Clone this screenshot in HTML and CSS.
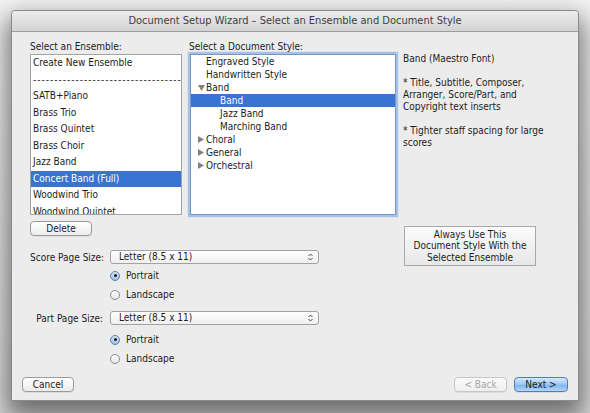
FILE: index.html
```html
<!DOCTYPE html>
<html>
<head>
<meta charset="utf-8">
<link rel="stylesheet" href="styles.css">
</head>
<body>
<div class="window">
  <div class="titlebar">Document Setup Wizard – Select an Ensemble and Document Style</div>
  <div class="main">
    <div class="top">
      <div class="col ens">
        <div class="label">Select an Ensemble:</div>
        <div class="list">
          <div class="item">Create New Ensemble</div>
          <div class="item dashes">-----------------------------------</div>
          <div class="item">SATB+Piano</div>
          <div class="item">Brass Trio</div>
          <div class="item">Brass Quintet</div>
          <div class="item">Brass Choir</div>
          <div class="item">Jazz Band</div>
          <div class="item sel">Concert Band (Full)</div>
          <div class="item">Woodwind Trio</div>
          <div class="item">Woodwind Quintet</div>
        </div>
      </div>
      <div class="col style">
        <div class="label">Select a Document Style:</div>
        <div class="tree">
          <div class="row"><span class="tri"></span><span class="txt">Engraved Style</span></div>
          <div class="row"><span class="tri"></span><span class="txt">Handwritten Style</span></div>
          <div class="row"><span class="tri"><svg width="7" height="6" viewBox="0 0 7 6"><path d="M0 0H7L3.5 6Z" fill="#808080"/></svg></span><span class="txt">Band</span></div>
          <div class="row child sel"><span class="txt">Band</span></div>
          <div class="row child"><span class="txt">Jazz Band</span></div>
          <div class="row child"><span class="txt">Marching Band</span></div>
          <div class="row"><span class="tri"><svg width="6" height="7" viewBox="0 0 6 7"><path d="M0 0V7L6 3.5Z" fill="#808080"/></svg></span><span class="txt">Choral</span></div>
          <div class="row"><span class="tri"><svg width="6" height="7" viewBox="0 0 6 7"><path d="M0 0V7L6 3.5Z" fill="#808080"/></svg></span><span class="txt">General</span></div>
          <div class="row"><span class="tri"><svg width="6" height="7" viewBox="0 0 6 7"><path d="M0 0V7L6 3.5Z" fill="#808080"/></svg></span><span class="txt">Orchestral</span></div>
        </div>
      </div>
      <div class="desc">
        <p>Band (Maestro Font)</p>
        <p>* Title, Subtitle, Composer,<br>Arranger, Score/Part, and<br>Copyright text inserts</p>
        <p>* Tighter staff spacing for large<br>scores</p>
      </div>
    </div>
    <div class="middle">
      <div class="controls">
        <button class="btn delete">Delete</button>
        <div class="field score">
          <span class="flabel">Score Page Size:</span>
          <div class="popup"><span>Letter (8.5 x 11)</span><svg width="5" height="8" viewBox="0 0 5 8"><path d="M0.5 3L2.5 1L4.5 3M0.5 5L2.5 7L4.5 5" fill="none" stroke="#444" stroke-width="1"/></svg></div>
        </div>
        <div class="radios">
          <div class="radio-row"><span class="radio on"></span>Portrait</div>
          <div class="radio-row"><span class="radio"></span>Landscape</div>
        </div>
        <div class="field part">
          <span class="flabel">Part Page Size:</span>
          <div class="popup"><span>Letter (8.5 x 11)</span><svg width="5" height="8" viewBox="0 0 5 8"><path d="M0.5 3L2.5 1L4.5 3M0.5 5L2.5 7L4.5 5" fill="none" stroke="#444" stroke-width="1"/></svg></div>
        </div>
        <div class="radios">
          <div class="radio-row"><span class="radio on"></span>Portrait</div>
          <div class="radio-row"><span class="radio"></span>Landscape</div>
        </div>
      </div>
      <button class="bevel">Always Use This<br>Document Style With the<br>Selected Ensemble</button>
    </div>
  </div>
  <div class="footer">
    <button class="btn cancel">Cancel</button>
    <button class="btn back" disabled>&lt; Back</button>
    <button class="btn next">Next &gt;</button>
  </div>
</div>
</body>
</html>
```

FILE: styles.css
```css
* { box-sizing: border-box; }
html, body { margin: 0; height: 100%; }
body {
  background: linear-gradient(#f3f3f3, #dedede);
  padding: 10px 11px 0 11px;
  font-family: "DejaVu Sans Condensed", "Open Sans", sans-serif;
  font-size: 10px;
  color: #1c1c1c;
  overflow: hidden;
}
.window {
  width: 568px;
  height: 391px;
  background: #ececec;
  border: 1px solid #8a8a8a;
  border-radius: 4px 4px 0 0;
  box-shadow: 0 12px 24px 5px rgba(0,0,0,.5);
  display: flex;
  flex-direction: column;
}
.titlebar {
  height: 21px;
  line-height: 20px;
  text-align: center;
  font-size: 11px;
  color: #404040;
  background: linear-gradient(#ededed, #d3d3d3);
  border-bottom: 1px solid #9c9c9c;
  border-radius: 4px 4px 0 0;
}
.main {
  padding: 8px 0 0 18px;
}
.top { display: flex; }
.label { height: 13px; line-height: 13px; margin-bottom: 1px; white-space: nowrap; }
.ens { width: 152px; }
.list {
  height: 161px;
  background: #fff;
  border: 1px solid #a3a3a3;
  overflow: hidden;
}
.item {
  height: 16.5px;
  line-height: 16.5px;
  padding-left: 2px;
  white-space: nowrap;
  overflow: hidden;
}
.item.dashes { letter-spacing: 1px; color: #333; }
.sel { background: #3a73d1; color: #fff; }
.style { width: 206px; margin-left: 8px; }
.style .label { margin-left: -1px; }
.tree {
  height: 161px;
  background: #fff;
  border: 1px solid #7396cb;
  box-shadow: 0 0 1px 2px rgba(110,160,225,.55);
  overflow: hidden;
}
.row {
  height: 13px;
  display: flex;
  align-items: center;
  white-space: nowrap;
}
.txt { line-height: 12px; }
.tri {
  width: 15px;
  height: 12px;
  padding-left: 7px;
  display: flex;
  align-items: center;
}
.row.child { padding-left: 29px; }
.desc {
  margin-left: 7px;
  padding-top: 13px;
  line-height: 12px;
  white-space: nowrap;
}
.desc p { margin: 0 0 12px 0; }
.middle { display: flex; align-items: flex-start; margin-top: 6px; }
.controls { width: 366px; }
.btn {
  font-family: inherit;
  font-size: 10px;
  color: #1c1c1c;
  height: 15px;
  padding: 0;
  line-height: 13px;
  border: 1px solid #9a9a9a;
  border-radius: 4px;
  background: linear-gradient(#ffffff, #ececec);
  box-shadow: 0 1px 0 rgba(0,0,0,.06);
  text-align: center;
}
.delete { width: 62px; display: block; }
.field { display: flex; align-items: center; margin-top: 14px; }
.field.part { margin-top: 7px; }
.flabel { width: 73px; text-align: right; white-space: nowrap; }
.popup {
  margin-left: 7px;
  width: 209px;
  height: 14px;
  border: 1px solid #a2a2a2;
  border-radius: 3px;
  background: linear-gradient(#ffffff, #efefef);
  display: flex;
  align-items: center;
  justify-content: space-between;
  padding: 0 5px 0 8px;
  line-height: 12px;
}
.radios { padding-left: 80px; margin-top: 2px; }
.field.part + .radios { margin-top: 5px; }
.radio-row { height: 19px; display: flex; align-items: center; }
.radio {
  width: 10px;
  height: 10px;
  border-radius: 50%;
  border: 1px solid #8c8c8c;
  background: linear-gradient(#ffffff, #e4e4e4);
  margin-right: 6px;
  position: relative;
}
.radio.on {
  border-color: #5f7fa6;
  background: linear-gradient(#d8e6f7, #9cc0ea);
}
.radio.on::after {
  content: "";
  position: absolute;
  left: 2.5px;
  top: 2.5px;
  width: 3px;
  height: 3px;
  border-radius: 50%;
  background: #1a1a1a;
}
.bevel {
  margin-left: 8px;
  margin-top: 5px;
  width: 132px;
  height: 40px;
  padding: 0;
  font-family: inherit;
  font-size: 10px;
  line-height: 11.5px;
  color: #1c1c1c;
  border: 1px solid #a8a8a8;
  background: linear-gradient(#fbfbfb, #e7e7e7);
  text-align: center;
}
.footer {
  margin-top: auto;
  display: flex;
  padding: 0 10px 8px 10px;
}
.cancel { width: 52px; }
.back { width: 53px; margin-left: auto; color: #a6a6a6; border-color: #c6c6c6; background: linear-gradient(#fafafa, #efefef); }
.next {
  width: 54px;
  margin-left: 7px;
  border-color: #4d7dbd;
  background: linear-gradient(#d6e8fc, #9cc7f4 50%, #7fb5ef 55%, #b5d7fb);
}
```
